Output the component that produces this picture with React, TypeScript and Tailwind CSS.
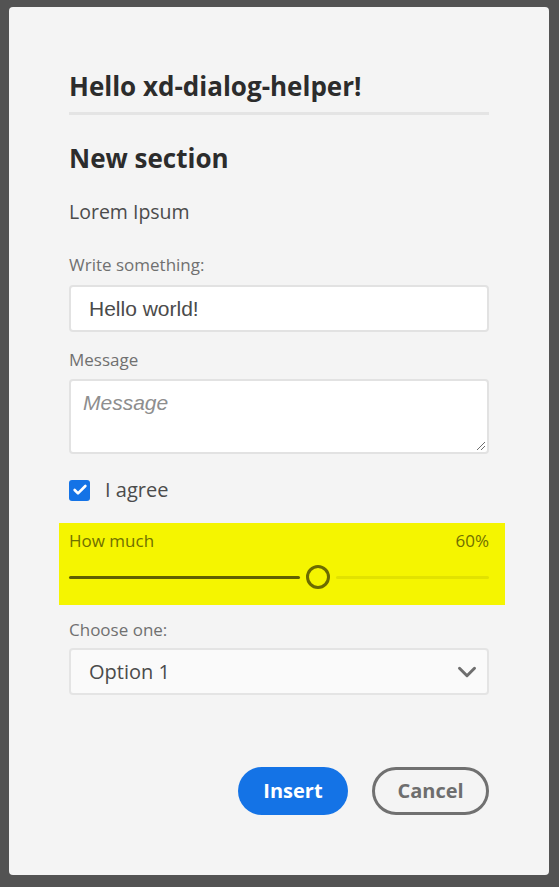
import { ChevronDown, Check } from 'lucide-react';

export default function App() {
    const value = 60;

    return (
        <div className="min-h-[887px] w-full bg-[#535353] pt-[7px] pl-[9px] pr-[10px] pb-[12px] font-['Open_Sans',sans-serif]">
            <div className="flex h-[868px] w-[540px] flex-col rounded-[4px] bg-[#f4f4f4] px-[60px] pt-[63px]">
                {/* Header */}
                <h1 className="text-[26px] font-bold leading-[32px] text-[#2c2c2c]">Hello xd-dialog-helper!</h1>
                <div className="mt-[10px] h-[3px] w-full bg-[#e4e4e4]" />

                <h2 className="mt-[27px] text-[26px] font-bold leading-[32px] text-[#2c2c2c]">New section</h2>
                <p className="mt-[24px] text-[19.5px] leading-[28px] text-[#4b4b4b]">Lorem Ipsum</p>

                {/* Text input */}
                <label className="mt-[27px] block text-[17px] leading-[24px] text-[#707070]">Write something:</label>
                <div className="mt-[8px] flex h-[47px] items-center rounded-[4px] border-2 border-[#e2e2e2] bg-white px-[18px] font-['Liberation_Sans',sans-serif] text-[21px] text-[#4b4b4b]">
                    Hello world!
                </div>

                {/* Textarea */}
                <label className="mt-[16px] block text-[17px] leading-[24px] text-[#707070]">Message</label>
                <div className="relative mt-[7px] h-[75px] rounded-[4px] border-2 border-[#e2e2e2] bg-white px-[12px] pt-[6px] font-['Liberation_Sans',sans-serif] text-[21px] italic text-[#8e8e8e]">
                    Message
                    <svg className="absolute right-[1px] bottom-[1px]" width="12" height="12" viewBox="0 0 12 12">
                        <path d="M11 3 L3 11 M11 7 L7 11" stroke="#6e6e6e" strokeWidth="1" />
                    </svg>
                </div>

                {/* Checkbox */}
                <div className="mt-[22px] flex items-center gap-[15px]">
                    <div className="flex h-[21px] w-[21px] items-center justify-center rounded-[3px] bg-[#1473e6]">
                        <Check size={16} strokeWidth={4} className="text-white" />
                    </div>
                    <span className="text-[20px] leading-[28px] text-[#4b4b4b]">I agree</span>
                </div>

                {/* Slider */}
                <div className="mt-[19px] -ml-[10px] -mr-[16px] h-[82px] bg-[#f5f500] pl-[10px] pr-[16px] pt-[6px]">
                    <div className="flex justify-between text-[17px] leading-[24px] text-[#707000]">
                        <span>How much</span>
                        <span>{value}%</span>
                    </div>
                    <div className="mt-[12px] flex items-center">
                        <div className="h-[3px] w-[231px] rounded-full bg-[#5f5f00]" />
                        <div className="mx-[6px] h-[24px] w-[24px] rounded-full border-[3px] border-[#6b6b00] bg-[#f5f500]" />
                        <div className="h-[3px] flex-1 rounded-full bg-[#e2e200]" />
                    </div>
                </div>

                {/* Select */}
                <label className="mt-[13px] block text-[17px] leading-[24px] text-[#707070]">Choose one:</label>
                <div className="mt-[6px] flex h-[47px] items-center justify-between rounded-[4px] border-2 border-[#e4e4e4] bg-[#fafafa] pr-[5px] pl-[18px] text-[20px] text-[#4b4b4b]">
                    <span>Option 1</span>
                    <ChevronDown size={30} strokeWidth={2.4} className="text-[#6e6e6e]" />
                </div>

                {/* Footer */}
                <div className="mt-[72px] flex justify-end gap-[24px]">
                    <button className="h-[48px] w-[110px] rounded-full bg-[#1473e6] text-[20px] font-bold text-white">Insert</button>
                    <button className="h-[48px] w-[117px] rounded-full border-[3px] border-[#707070] text-[20px] font-bold text-[#6e6e6e]">Cancel</button>
                </div>
            </div>
        </div>
    );
}
